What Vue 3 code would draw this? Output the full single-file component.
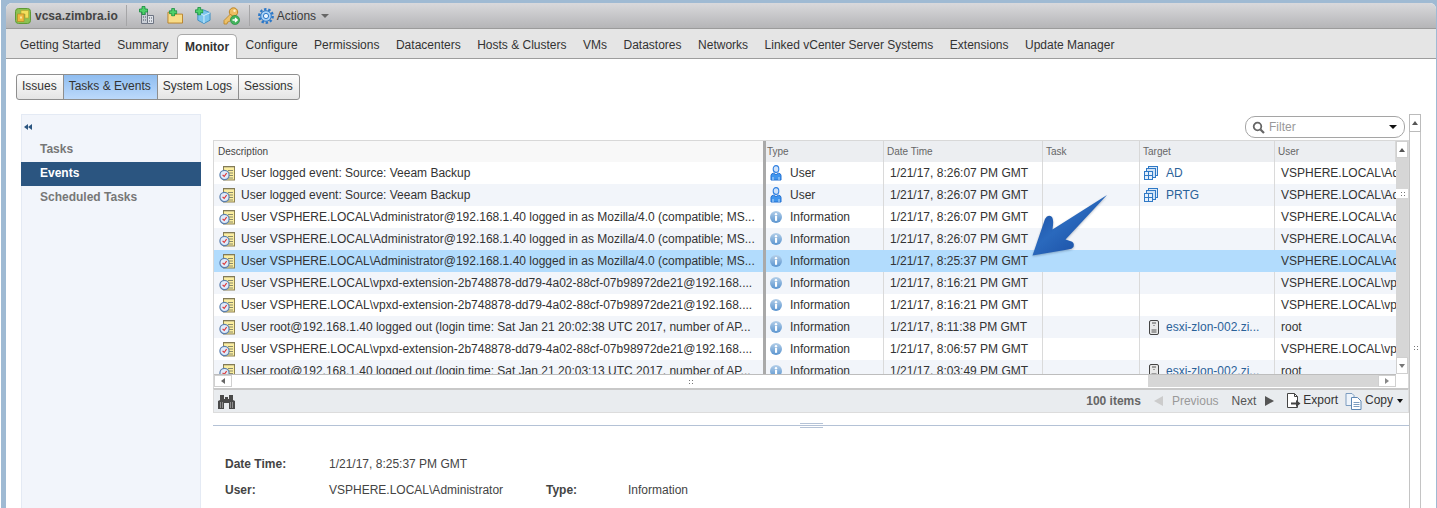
<template>
  <div class="page">
    <svg class="defs" width="0" height="0">
      <defs>
        <linearGradient id="glassBlue" x1="0" y1="0" x2="0" y2="1">
          <stop offset="0" stop-color="#b4cfe9" />
          <stop offset="1" stop-color="#5a94cf" />
        </linearGradient>
        <linearGradient id="arrowBlue" x1="0" y1="0" x2="1" y2="1">
          <stop offset="0" stop-color="#17479c" />
          <stop offset="0.45" stop-color="#2a69bd" />
          <stop offset="1" stop-color="#14449a" />
        </linearGradient>
      </defs>
      <symbol id="i-note" viewBox="0 0 16 16">
        <rect x="4.500" y="1.500" width="11" height="13.500" fill="#fbeea0" stroke="#8d8252" />
        <path d="M5 1.500v1M7 1.500v1M9 1.500v1M11 1.500v1M13 1.500v1M15 1.500v1" stroke="#666" />
        <path d="M9 5.500h5M10 8h4M10 10.500h4M7 13h7" stroke="#8a8a6c" />
        <circle cx="5.500" cy="10" r="4.600" fill="#dfeafa" stroke="#5a7fae" stroke-width="1.200" />
        <path d="M3.600 9.800l1.600 1.700 2.400-3.400" fill="none" stroke="#d33" stroke-width="1.100" />
      </symbol>
      <symbol id="i-user" viewBox="0 0 12 16">
        <ellipse cx="6" cy="4" rx="2.800" ry="3.400" fill="#cfe3fb" stroke="#2e7fe0" stroke-width="1.100" />
        <path d="M1 15V10.500Q1 8.500 3.500 8.200L6 9.600 8.500 8.200Q11 8.500 11 10.500V15Z" fill="#3f95ee" stroke="#2270d2" />
        <path d="M3 15v-3M9 15v-3" stroke="#bcdcfb" />
      </symbol>
      <symbol id="i-info" viewBox="0 0 12 12">
        <circle cx="6" cy="6" r="6" fill="url(#glassBlue)" />
        <rect x="5" y="5" width="2.100" height="4.800" fill="#fff" />
        <circle cx="6" cy="3.200" r="1.200" fill="#fff" />
      </symbol>
      <symbol id="i-vm" viewBox="0 0 14 14">
        <rect x="4.500" y="0.500" width="9" height="9" fill="#dbe9f8" stroke="#2f79c6" />
        <rect x="2.500" y="2.500" width="9" height="9" fill="#cfe2f6" stroke="#2f79c6" />
        <rect x="0.500" y="5.500" width="8" height="8" fill="#e6f0fb" stroke="#2f79c6" />
        <path d="M4.500 5.500v8M0.500 9.500h8" stroke="#2f79c6" />
      </symbol>
      <symbol id="i-host" viewBox="0 0 10 15">
        <rect x="0.500" y="0.500" width="9" height="14" rx="1.500" fill="#e8e8e8" stroke="#444" />
        <path d="M3 3h4M5 5v1M2.500 10h5M2.500 12h5" stroke="#555" />
      </symbol>
      <symbol id="i-plus" viewBox="0 0 9 9">
        <path d="M3 0.500h3v2.500h2.500v3H6v2.500H3V6H0.500V3H3Z" fill="#4fd06a" stroke="#128a3b" stroke-width="0.800" />
      </symbol>
    </svg>

    <div class="window">
      <header class="topbar">
        <svg class="logo" width="16" height="16" viewBox="0 0 16 16">
          <rect x="0.500" y="0.500" width="15" height="15" rx="3" fill="#8cc152" stroke="#5f9a35" />
          <path d="M6 2.500h7.500V10H10V6H6Z" fill="#f2e05c" stroke="#b7a22b" stroke-width="0.600" />
          <path d="M2.500 6H9v7.500H2.500Z" fill="#eeb83f" stroke="#b5801e" stroke-width="0.600" />
          <rect x="5" y="8.500" width="2" height="2" fill="#f8e9a0" />
        </svg>
        <span class="host-name">vcsa.zimbra.io</span>
        <span class="sep"></span>
        <div class="tool-icons">
          <svg width="16" height="19" viewBox="0 0 16 19">
            <path d="M2.500 5.500h6v12h-6z" fill="#c9ced6" stroke="#6d7482" />
            <path d="M8.500 9.500h6v8h-6z" fill="#dfe2e8" stroke="#6d7482" />
            <path d="M4 8h1M6 8h1M4 11h1M6 11h1M4 14h1M6 14h1M10 12h1M12 12h1M10 15h1M12 15h1" stroke="#4a5261" />
            <use href="#i-plus" x="0" y="0" width="9" height="9" />
          </svg>
          <svg width="16" height="16" viewBox="0 0 17 17">
            <path d="M1 4.500h6l1.500 2h8v9.500H1Z" fill="#f8dc88" stroke="#b9812a" />
            <use href="#i-plus" x="2" y="0" width="9" height="9" />
          </svg>
          <svg width="16" height="17" viewBox="0 0 17 18">
            <path d="M9 3l7 3v8l-6.500 3.500L3 14V6Z" fill="#7cc4ee" stroke="#3f8fc2" />
            <path d="M3 6l6.500 3L16 6M9.500 9v8" fill="none" stroke="#d7f0fc" />
            <use href="#i-plus" x="0" y="0" width="9" height="9" />
          </svg>
          <svg width="17" height="18" viewBox="0 0 17 18">
            <circle cx="10.500" cy="5" r="4.200" fill="#eebd62" stroke="#bd8526" />
            <circle cx="11.500" cy="3.800" r="1.200" fill="#fff3c9" />
            <path d="M7.500 7L1 13.500V17h3l.5-2 2-.5L10 10Z" fill="#ecc069" stroke="#b98324" stroke-width="0.800" />
            <circle cx="12" cy="13" r="4.600" fill="#43b35c" stroke="#1f8a3a" stroke-width="0.600" />
            <path d="M9.500 13h4.500M12 11l2.200 2-2.200 2" fill="none" stroke="#fff" stroke-width="1.300" />
          </svg>
        </div>
        <span class="sep sep-actions"></span>
        <svg class="gear" width="16" height="16" viewBox="0 0 16 16">
          <circle cx="8" cy="8" r="6.700" fill="none" stroke="#2c78c8" stroke-width="2.400" stroke-dasharray="2.400 1.800" />
          <circle cx="8" cy="8" r="5.300" fill="#a8d0f5" stroke="#2c78c8" />
          <circle cx="8" cy="8" r="2.600" fill="#e9f3fc" stroke="#2c78c8" />
        </svg>
        <span class="actions">Actions</span>
        <span class="caret gray"></span>
      </header>

      <nav class="tabs">
        <span v-for="tab in tabs" :key="tab" class="tab" :class="{ active: tab === 'Monitor' }">{{ tab }}</span>
      </nav>

      <div class="btn-group">
        <span v-for="item in subTabs" :key="item" class="btn" :class="{ on: item === 'Tasks & Events' }">{{ item }}</span>
      </div>

      <div class="body">
        <aside class="side">
          <div class="collapse">
            <i></i><i></i>
          </div>
          <div v-for="item in sideItems" :key="item" class="side-item" :class="{ selected: item === 'Events' }">{{ item }}</div>
        </aside>

        <main class="main">
          <div class="filter-row">
            <div class="filter">
              <svg width="13" height="13" viewBox="0 0 13 13">
                <circle cx="5.500" cy="5.500" r="3.800" fill="none" stroke="#666" stroke-width="1.800" />
                <path d="M8.500 8.500l3.500 3.500" stroke="#666" stroke-width="2.200" />
              </svg>
              <span class="filter-text">Filter</span>
              <span class="caret black"></span>
            </div>
          </div>

          <div class="grid">
            <div class="grid-left">
              <div class="thead cols">
                <div v-for="col in columns" :key="col" class="th" :class="{ first: col === 'Description' }">{{ col }}</div>
              </div>
              <div class="tbody">
                <div v-for="(row, index) in rows" :key="index" class="tr cols" :class="{ alt: index % 2 === 1, hl: index === 4 }">
                  <div class="td desc">
                    <svg class="ic-note" width="16" height="16"><use href="#i-note" /></svg>
                    <span>{{ row.text }}</span>
                  </div>
                  <div class="td type">
                    <svg v-if="row.type === 'User'" class="ic-user" width="12" height="16"><use href="#i-user" /></svg>
                    <svg v-else class="ic-info" width="12" height="12"><use href="#i-info" /></svg>
                    <span>{{ row.type }}</span>
                  </div>
                  <div class="td date">{{ row.date }}</div>
                  <div class="td"></div>
                  <div class="td target">
                    <template v-if="row.target">
                      <svg v-if="row.vm" class="ic-vm" width="14" height="14"><use href="#i-vm" /></svg>
                      <svg v-else class="ic-host" width="10" height="15"><use href="#i-host" /></svg>
                      <span class="link">{{ row.target }}</span>
                    </template>
                  </div>
                  <div class="td user">{{ row.user }}</div>
                </div>
              </div>
              <div class="hscroll">
                <span class="sb-btn h"><i class="tri left"></i></span>
                <span class="h-thumb"><span class="dots"></span></span>
                <span class="h-track"></span>
                <span class="sb-btn h"><i class="tri right"></i></span>
              </div>
            </div>
            <div class="vscroll">
              <span class="sb-btn v"><i class="tri up"></i></span>
              <span class="v-track"></span>
              <span class="v-thumb"><span class="dots"></span></span>
              <span class="v-track long"></span>
              <span class="sb-btn v"><i class="tri down"></i></span>
            </div>
          </div>

          <div class="footer">
            <svg class="binoculars" width="17" height="15" viewBox="0 0 17 15">
              <path d="M2 1h4v4h1V3h3v2h1V1h4v5l2 1v8h-6V9H6v6H0V7l2-1Z" fill="#4a4a4a" />
              <path d="M2.500 8v6M4.500 8v6M12.500 8v6M14.500 8v6" stroke="#8f8f8f" />
            </svg>
            <span class="count">100 items</span>
            <i class="tri-big left"></i>
            <span class="prev">Previous</span>
            <span class="next">Next</span>
            <i class="tri-big right"></i>
            <svg class="export-ic" width="15" height="16" viewBox="0 0 15 16">
              <path d="M1.500 .5h7l3 3v11h-10z" fill="#fff" stroke="#444" />
              <path d="M8.500 .5v3h3" fill="none" stroke="#444" />
              <path d="M5 9.500h5V7l4.500 3.500L10 14v-2.500H5z" fill="#444" />
            </svg>
            <span class="foot-label">Export</span>
            <svg class="copy-ic" width="17" height="17" viewBox="0 0 17 17">
              <path d="M1 .5h6l2 2v10H1z" fill="#eef4fb" stroke="#7d9dc0" />
              <path d="M6.500 4.500h6l3.500 3.500v8.500H6.500z" fill="#fff" stroke="#5d86b3" />
              <path d="M8.500 9.500h6M8.500 11.500h6M8.500 13.500h6" stroke="#7d9dc0" />
            </svg>
            <span class="foot-label copy">Copy</span>
            <span class="caret black small"></span>
          </div>

          <div class="splitter">
            <span class="grip"></span>
          </div>

          <div class="details">
            <div class="detail-row">
              <span class="d-label">Date Time:</span>
              <span class="d-value">1/21/17, 8:25:37 PM GMT</span>
            </div>
            <div class="detail-row">
              <span class="d-label">User:</span>
              <span class="d-value wide">VSPHERE.LOCAL\Administrator</span>
              <span class="d-label narrow">Type:</span>
              <span class="d-value">Information</span>
            </div>
          </div>
        </main>

        <div class="outer-scroll">
          <span class="sb-btn o"><i class="tri up"></i></span>
          <span class="dots outer-dots"></span>
        </div>
      </div>
    </div>

    <svg class="callout" width="90" height="76" viewBox="1028 190 90 76">
      <path
        d="M1032.500 255.500L1045 219Q1048 213.500 1052 217Q1054 220 1052.500 229.500L1107 195L1065.500 239.500L1070 241Q1075 242 1073.500 247Q1072 249 1068 249.500Z"
        fill="url(#arrowBlue)"
      />
    </svg>
  </div>
</template>

<script setup>
const tabs = [
  'Getting Started', 'Summary', 'Monitor', 'Configure', 'Permissions', 'Datacenters',
  'Hosts & Clusters', 'VMs', 'Datastores', 'Networks', 'Linked vCenter Server Systems',
  'Extensions', 'Update Manager',
];
const subTabs = ['Issues', 'Tasks & Events', 'System Logs', 'Sessions'];
const sideItems = ['Tasks', 'Events', 'Scheduled Tasks'];
const columns = ['Description', 'Type', 'Date Time', 'Task', 'Target', 'User'];

const loginText = 'User VSPHERE.LOCAL\\Administrator@192.168.1.40 logged in as Mozilla/4.0 (compatible; MS...';
const vpxdText = 'User VSPHERE.LOCAL\\vpxd-extension-2b748878-dd79-4a02-88cf-07b98972de21@192.168....';
const adminUser = 'VSPHERE.LOCAL\\Administrator';
const vpxdUser = 'VSPHERE.LOCAL\\vpxd-extension';

const rows = [
  { text: 'User logged event: Source: Veeam Backup', type: 'User', date: '1/21/17, 8:26:07 PM GMT', target: 'AD', vm: true, user: adminUser },
  { text: 'User logged event: Source: Veeam Backup', type: 'User', date: '1/21/17, 8:26:07 PM GMT', target: 'PRTG', vm: true, user: adminUser },
  { text: loginText, type: 'Information', date: '1/21/17, 8:26:07 PM GMT', user: adminUser },
  { text: loginText, type: 'Information', date: '1/21/17, 8:26:07 PM GMT', user: adminUser },
  { text: loginText, type: 'Information', date: '1/21/17, 8:25:37 PM GMT', user: adminUser },
  { text: vpxdText, type: 'Information', date: '1/21/17, 8:16:21 PM GMT', user: vpxdUser },
  { text: vpxdText, type: 'Information', date: '1/21/17, 8:16:21 PM GMT', user: vpxdUser },
  { text: 'User root@192.168.1.40 logged out (login time: Sat Jan 21 20:02:38 UTC 2017, number of AP...', type: 'Information', date: '1/21/17, 8:11:38 PM GMT', target: 'esxi-zlon-002.zi...', user: 'root' },
  { text: vpxdText, type: 'Information', date: '1/21/17, 8:06:57 PM GMT', user: vpxdUser },
  { text: 'User root@192.168.1.40 logged out (login time: Sat Jan 21 20:03:13 UTC 2017, number of AP...', type: 'Information', date: '1/21/17, 8:03:49 PM GMT', target: 'esxi-zlon-002.zi...', user: 'root' },
];
</script>

<style>
body {
  background: #9fbad3;
}
</style>

<style scoped>
.page {
  position: relative;
  height: 508px;
  overflow: hidden;
  box-sizing: border-box;
  padding: 3px 1px 0 5px;
  background: #9fbad3;
  border-left: 1px solid #fff;
  font-family: "Liberation Sans", Arial, sans-serif;
  font-size: 12px;
  color: #333;
}
.defs {
  position: absolute;
}
.window {
  height: 505px;
  background: #fff;
  border-radius: 6px 6px 0 0;
  overflow: hidden;
}
.topbar {
  height: 25px;
  display: flex;
  align-items: center;
  padding-left: 9px;
  background: linear-gradient(#d9d9dc, #b5b5b7);
  border-bottom: 1px solid #9b9b9b;
}
.logo {
  flex: none;
}
.host-name {
  margin-left: 4px;
  font-weight: bold;
  color: #444;
}
.sep {
  width: 1px;
  height: 21px;
  margin-left: 8px;
  background: #a5a5a7;
}
.tool-icons {
  display: flex;
  align-items: center;
  gap: 12px;
  margin-left: 12px;
}
.sep-actions {
  margin-left: 9px;
}
.gear {
  margin-left: 8px;
}
.actions {
  margin-left: 3px;
  color: #3a3a3a;
}
.caret {
  display: inline-block;
  width: 0;
  height: 0;
  border-left: 4px solid transparent;
  border-right: 4px solid transparent;
  border-top: 4px solid #111;
}
.caret.gray {
  margin-left: 5px;
  border-top-color: #666;
}
.tabs {
  height: 29px;
  display: flex;
  align-items: flex-end;
  padding-left: 6px;
  background: #e5e5e5;
  border-bottom: 1px solid #9d9d9d;
}
.tab {
  height: 24px;
  line-height: 22px;
  padding: 0 8px;
  margin-right: 0.5px;
}
.tab.active {
  height: 25px;
  margin-bottom: -1px;
  padding: 0 7px;
  box-sizing: border-box;
  line-height: 25px;
  background: #fff;
  border: 1px solid #a9a9a9;
  border-bottom: 0;
  border-radius: 5px 5px 0 0;
  font-weight: bold;
}
.btn-group {
  display: inline-flex;
  margin: 15px 0 0 10px;
  height: 24px;
  border: 1px solid #8e8e8e;
  border-radius: 3px;
  background: linear-gradient(#fdfdfd, #e4e4e4);
  overflow: hidden;
}
.btn {
  line-height: 22px;
  padding: 0 6px 0 5px;
  border-left: 1px solid #8e8e8e;
}
.btn:first-child {
  border-left: 0;
}
.btn.on {
  background: linear-gradient(#8fbdf0, #bcd9fb);
}
.body {
  display: flex;
  margin-top: 14px;
  padding-left: 15px;
  height: 395px;
}
.side {
  width: 180px;
  flex: none;
  box-sizing: border-box;
  background: #f2f5fb;
  border: 1px solid #e4eaf4;
}
.collapse {
  height: 23px;
  display: flex;
  align-items: center;
  padding-left: 2px;
}
.collapse i {
  width: 0;
  height: 0;
  border-top: 3.5px solid transparent;
  border-bottom: 3.5px solid transparent;
  border-right: 4px solid #2b5580;
}
.side-item {
  height: 24px;
  line-height: 22px;
  padding-left: 18px;
  font-weight: bold;
  color: #777;
}
.side-item.selected {
  margin: 0 -1px;
  padding-left: 19px;
  background: #2b5580;
  color: #fff;
}
.main {
  width: 1196px;
  margin-left: 12px;
  flex: none;
}
.filter-row {
  height: 26px;
  display: flex;
  justify-content: flex-end;
  align-items: flex-start;
  padding: 2px 4px 0 0;
  box-sizing: border-box;
}
.filter {
  width: 160px;
  height: 22px;
  box-sizing: border-box;
  display: flex;
  align-items: center;
  padding: 0 7px 0 6px;
  border: 1px solid #a5a5a5;
  border-radius: 10px;
}
.filter-text {
  flex: 1;
  margin-left: 4px;
  color: #999;
}
.grid {
  display: flex;
  height: 248px;
  box-sizing: border-box;
  border: 1px solid #d8d8d8;
  border-bottom: 0;
}
.grid-left {
  width: 1182px;
}
.cols {
  display: grid;
  grid-template-columns: 552px 118px 159px 97px 135px 121px;
}
.thead {
  height: 21px;
  box-sizing: border-box;
  border-bottom: 1px solid #d8d8d8;
}
.th {
  background: #eceef1;
  border-right: 1px solid #d8d8d8;
  padding-left: 3px;
  font-size: 10px;
  line-height: 21px;
  color: #666;
}
.th.first {
  background: #f8f8f8;
  color: #444;
  padding-left: 4px;
  border-right: 3px solid #a9a9a9;
}
.th.first + .th {
  padding-left: 1px;
}
.tbody {
  height: 212px;
  overflow: hidden;
}
.tr {
  height: 22px;
  background: #fff;
}
.tr.alt {
  background: #f2f5fa;
}
.tr.hl {
  background: #b2dcfd;
}
.td {
  display: flex;
  align-items: center;
  overflow: hidden;
  white-space: nowrap;
  color: #333;
  border-right: 1px solid #dadada;
}
.tr.hl .td {
  border-right-color: #b2dcfd;
}
.td.desc,
.tr.hl .td.desc {
  border-right: 3px solid #a9a9a9;
  padding-left: 5px;
}
.ic-note {
  margin-right: 6px;
  flex: none;
}
.td.type {
  padding-left: 4px;
}
.ic-user {
  margin-right: 8px;
}
.ic-info {
  margin-right: 8px;
}
.td.date {
  padding-left: 6px;
}
.td.target {
  padding-left: 4px;
}
.ic-vm {
  margin-right: 8px;
}
.ic-host {
  margin: 0 7px 0 5px;
}
.link {
  color: #2b6299;
}
.td.user {
  padding-left: 6px;
  border-right: 0;
}
.hscroll {
  display: flex;
  height: 13px;
  border-top: 1px solid #bdbdbd;
  box-sizing: border-box;
}
.sb-btn {
  display: flex;
  align-items: center;
  justify-content: center;
  flex: none;
  background: #fff;
  border: 1px solid #d0d0d0;
  box-sizing: border-box;
}
.sb-btn.h {
  width: 18px;
}
.h-thumb {
  flex: none;
  width: 916px;
  display: flex;
  align-items: center;
  justify-content: center;
  background: #fff;
}
.h-track {
  flex: 1;
  background: #d6d6d6;
}
.vscroll {
  width: 12px;
  flex: none;
  height: 233px;
  display: flex;
  flex-direction: column;
  background: #d6d6d6;
}
.sb-btn.v {
  height: 17px;
}
.v-track {
  height: 31px;
}
.v-track.long {
  flex: 1;
}
.v-thumb {
  height: 9px;
  display: flex;
  align-items: center;
  justify-content: center;
  background: #fff;
}
.dots {
  width: 5px;
  height: 5px;
  background: radial-gradient(circle, #777 0 1px, transparent 1px) 0 0 / 3px 3px;
}
.tri {
  width: 0;
  height: 0;
  border: 3px solid transparent;
}
.tri.up {
  border-bottom: 4px solid #555;
  border-top: 0;
}
.tri.down {
  border-top: 4px solid #777;
  border-bottom: 0;
}
.tri.left {
  border-right: 4px solid #666;
  border-left: 0;
}
.tri.right {
  border-left: 4px solid #888;
  border-right: 0;
}
.footer {
  display: flex;
  align-items: center;
  height: 25px;
  box-sizing: border-box;
  padding: 0 5px 0 4px;
  background: #e9ecef;
  border: 1px solid #dcdcdc;
  border-top: 2px solid #c8c8c8;
}
.binoculars {
  margin-right: auto;
}
.count {
  font-weight: bold;
  color: #666;
}
.tri-big {
  width: 0;
  height: 0;
  border: 5px solid transparent;
}
.tri-big.left {
  margin-left: 13px;
  border-left: 0;
  border-right: 9px solid #ccc;
}
.tri-big.right {
  margin-left: 9px;
  border-right: 0;
  border-left: 9px solid #555;
}
.prev {
  margin-left: 9px;
  color: #999;
}
.next {
  margin-left: 13px;
  color: #555;
}
.export-ic {
  margin-left: 12px;
}
.foot-label {
  margin-left: 2px;
  margin-bottom: 3px;
  color: #333;
}
.copy-ic {
  margin-left: 7px;
}
.foot-label.copy {
  margin-left: 3px;
}
.caret.small {
  margin-left: 4px;
  border-left-width: 3.5px;
  border-right-width: 3.5px;
}
.splitter {
  position: relative;
  height: 13px;
  box-sizing: border-box;
  border-bottom: 1px solid #b4c2d6;
}
.grip {
  position: absolute;
  left: 587px;
  bottom: -3px;
  width: 23px;
  height: 5px;
  box-sizing: border-box;
  border-top: 1px solid #b4c2d6;
  border-bottom: 1px solid #b4c2d6;
}
.details {
  padding: 25px 0 0 12px;
}
.detail-row {
  display: flex;
  height: 26px;
  align-items: center;
}
.d-label {
  width: 104px;
  font-weight: bold;
  color: #444;
}
.d-label.narrow {
  width: 82px;
}
.d-value {
  color: #444;
}
.d-value.wide {
  width: 217px;
}
.outer-scroll {
  position: relative;
  width: 12px;
  flex: none;
  box-sizing: border-box;
  border-left: 1px solid #c4c4c4;
  border-right: 1px solid #c4c4c4;
}
.sb-btn.o {
  height: 18px;
  margin: 0 -1px;
  border-color: #bbb;
}
.outer-dots {
  position: absolute;
  top: 231px;
  left: 3px;
}
.callout {
  position: absolute;
  left: 1027px;
  top: 190px;
  filter: drop-shadow(0 1px 1px rgba(40, 60, 90, 0.35));
}
</style>
